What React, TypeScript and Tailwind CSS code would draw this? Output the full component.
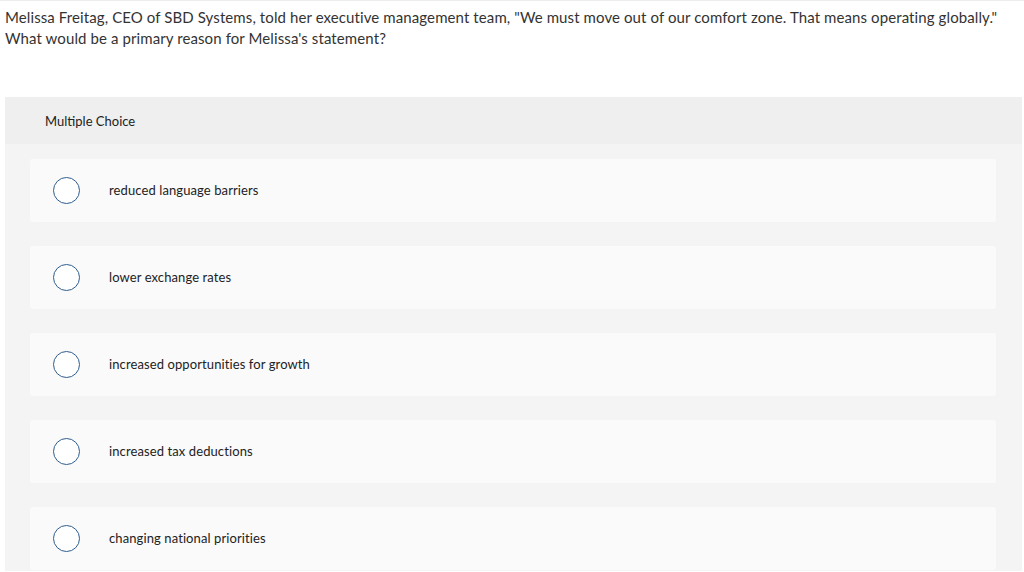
import React from "react";

const options = [
  "reduced language barriers",
  "lower exchange rates",
  "increased opportunities for growth",
  "increased tax deductions",
  "changing national priorities",
];

export default function App() {
  return (
    <div
      className="w-[1024px] h-[572px] bg-white overflow-hidden border-t border-[#ececec] text-[#333]"
      style={{ fontFamily: 'Lato, "Open Sans", "Liberation Sans", sans-serif' }}
    >
      <div className="pl-[5px] pt-[6px] text-[15px] leading-[21px] text-[#333] tracking-[0.1px]">
        <p>
          Melissa Freitag, CEO of SBD Systems, told her executive management team, "We must move out of our comfort
          zone. That means operating globally."
        </p>
        <p>What would be a primary reason for Melissa's statement?</p>
      </div>
      <div className="ml-[5px] mr-[2px] mt-[48px] bg-[#f4f4f4] h-[474px] rounded-t-[2px]">
        <div className="h-[47px] bg-[#efefef] flex items-center pt-[2px] pl-[40px] text-[13px] text-[#222]">
          Multiple Choice
        </div>
        <div className="pl-[25px] pr-[26px] pt-[15px] flex flex-col gap-[24px]">
          {options.map((o) => (
            <div key={o} className="h-[63px] bg-[#fafafa] rounded-[3px] flex items-center">
              <div className="ml-[23px] w-[27px] h-[27px] rounded-full border-[1.5px] border-[#2f5d8e] bg-white" />
              <span className="ml-[29px] text-[13px] text-[#222] tracking-[0.1px]">{o}</span>
            </div>
          ))}
        </div>
      </div>
    </div>
  );
}
